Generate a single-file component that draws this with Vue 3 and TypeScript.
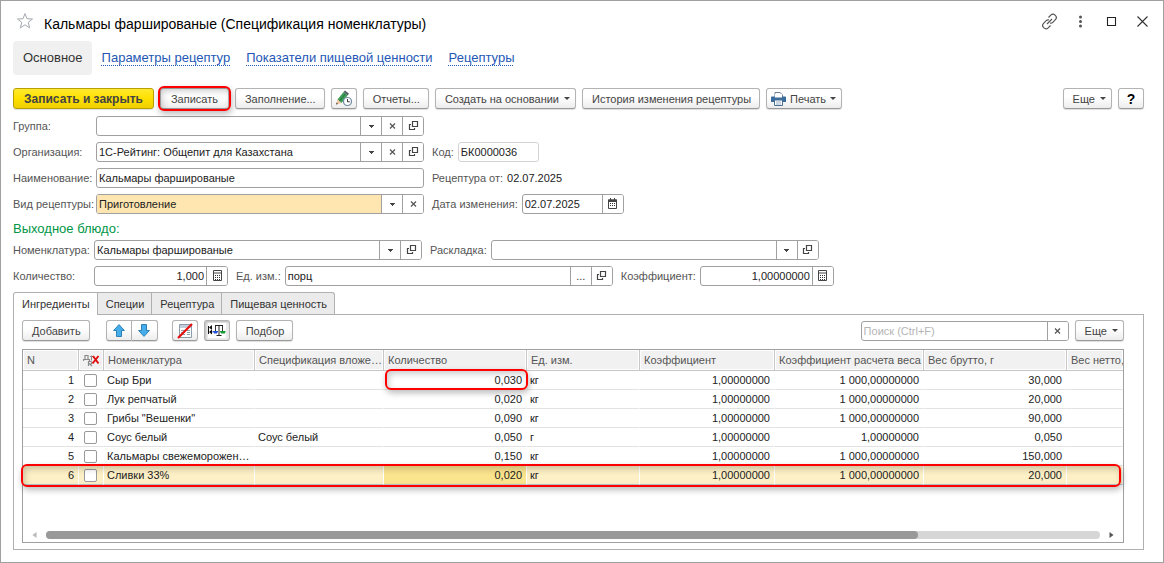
<script setup lang="ts">
import { reactive, ref } from 'vue'

interface Ingredient {
  n: number
  checked: boolean
  name: string
  spec: string
  qty: string
  unit: string
  coef: string
  weightCoef: string
  gross: string
}

const HEADER_HEIGHT = 21
const ROW_HEIGHT = 19
const VISIBLE_WIDTH = 1101
const CONTENT_WIDTH = 1331

const columns = ['Номенклатура', 'Спецификация вложе…', 'Количество', 'Ед. изм.', 'Коэффициент', 'Коэффициент расчета веса', 'Вес брутто, г', 'Вес нетто,']
const links = ['Параметры рецептур', 'Показатели пищевой ценности', 'Рецептуры']
const tabs = ['Ингредиенты', 'Специи', 'Рецептура', 'Пищевая ценность']

const rows = reactive<Ingredient[]>([
  { n: 1, checked: false, name: 'Сыр Бри', spec: '', qty: '0,030', unit: 'кг', coef: '1,00000000', weightCoef: '1 000,00000000', gross: '30,000' },
  { n: 2, checked: false, name: 'Лук репчатый', spec: '', qty: '0,020', unit: 'кг', coef: '1,00000000', weightCoef: '1 000,00000000', gross: '20,000' },
  { n: 3, checked: false, name: 'Грибы "Вешенки"', spec: '', qty: '0,090', unit: 'кг', coef: '1,00000000', weightCoef: '1 000,00000000', gross: '90,000' },
  { n: 4, checked: false, name: 'Соус белый', spec: 'Соус белый', qty: '0,050', unit: 'г', coef: '1,00000000', weightCoef: '1,00000000', gross: '0,050' },
  { n: 5, checked: false, name: 'Кальмары свежеморожен…', spec: '', qty: '0,150', unit: 'кг', coef: '1,00000000', weightCoef: '1 000,00000000', gross: '150,000' },
  { n: 6, checked: false, name: 'Сливки 33%', spec: '', qty: '0,020', unit: 'кг', coef: '1,00000000', weightCoef: '1 000,00000000', gross: '20,000' },
])

const form = reactive({
  group: '',
  org: '1С-Рейтинг: Общепит для Казахстана',
  code: 'БК0000036',
  name: 'Кальмары фаршированые',
  kind: 'Приготовление',
  changed: '02.07.2025',
  item: 'Кальмары фаршированые',
  layout: '',
  qty: '1,000',
  unit: 'порц',
  coef: '1,00000000',
})

const activeTab = ref(0)
const selected = ref(5)
const search = ref('')
</script>

<template>
  <svg class="defs" aria-hidden="true">
    <symbol id="i-drop" viewBox="0 0 13 12"><path d="M4 5h5v1H8v1H7v1H6V7H5V6H4z" fill="#444" /></symbol>
    <symbol id="i-clear" viewBox="0 0 13 12"><path d="M4 3.5l5 5M9 3.5l-5 5" stroke="#555" stroke-width="1.2" fill="none" /></symbol>
    <symbol id="i-open" viewBox="0 0 13 12"><path d="M5.500 1.500h5v5h-5z" fill="none" stroke="#444" stroke-width="1.200" /><path d="M4 4.500H2.500v5h5V8" fill="none" stroke="#444" stroke-width="1.200" /></symbol>
    <symbol id="i-calc" viewBox="0 0 13 12"><path d="M2.5.5h8v10h-8zM2.5 3h8" fill="none" stroke="#444" /><path d="M4 5h1v1H4zM6 5h1v1H6zM8 5h1v1H8zM4 7h1v1H4zM6 7h1v1H6zM8 7h1v1H8zM4 9h1v1H4zM6 9h1v1H6zM8 9h1v1H8z" fill="#333" /></symbol>
    <symbol id="i-date" viewBox="0 0 13 12"><path d="M2.5 2h8v8.5h-8z" fill="none" stroke="#444" /><path d="M2 1.5h9V4H2zM4 0h1v2H4zM8 0h1v2H8z" fill="#444" /><path d="M4 5h1v1H4zM6 5h1v1H6zM8 5h1v1H8zM4 7h1v1H4zM6 7h1v1H6zM8 7h1v1H8z" fill="#333" /></symbol>
  </svg>

  <main class="window">
    <header class="titlebar">
      <button class="flat" type="button" aria-label="Добавить в избранное">
        <svg width="18" height="18" viewBox="0 0 18 18"><path d="M9 1.600l2 5.100 5.500.3-4.300 3.400 1.500 5.500L9 12.800l-4.700 3.100 1.500-5.500L1.500 7 7 6.700z" fill="#fff" stroke="#a3a9b0" /></svg>
      </button>
      <h1>Кальмары фаршированые (Спецификация номенклатуры)</h1>
      <div class="window-tools">
        <button class="flat" type="button" aria-label="Ссылка">
          <svg width="17" height="17" viewBox="0 0 17 17" fill="none" stroke="#555" stroke-width="1.200"><path d="M7.500 4.500l2.300-2.300c1.200-1.200 3-1.200 4.200-.1l.5.500c1.100 1.200 1 3-.1 4.100l-2.600 2.600c-.8.800-1.800 1-2.700.8M9.500 12.500l-2.300 2.300c-1.200 1.200-3 1.200-4.200.1l-.5-.5c-1.100-1.200-1-3 .1-4.100l2.600-2.600c.8-.8 1.800-1 2.700-.8M6 11l5-5" /></svg>
        </button>
        <button class="flat" type="button" aria-label="Меню">
          <svg width="17" height="17" viewBox="0 0 17 17" fill="#555"><circle cx="8.500" cy="4" r="1.500" /><circle cx="8.500" cy="8.500" r="1.500" /><circle cx="8.500" cy="13" r="1.500" /></svg>
        </button>
        <button class="flat" type="button" aria-label="Развернуть">
          <svg width="17" height="17" viewBox="0 0 17 17"><path d="M4.500 4.500h8v8h-8z" fill="none" stroke="#222" stroke-width="1.100" /></svg>
        </button>
        <button class="flat" type="button" aria-label="Закрыть">
          <svg width="17" height="17" viewBox="0 0 17 17"><path d="M3.500 3.500l10 10M13.500 3.500l-10 10" stroke="#333" stroke-width="1.100" /></svg>
        </button>
      </div>
    </header>

    <nav class="sections">
      <button class="section-current" type="button">Основное</button>
      <a v-for="link in links" :key="link" href="#">{{ link }}</a>
    </nav>

    <div class="toolbar">
      <button class="btn primary" type="button">Записать и закрыть</button>
      <button class="btn marked" type="button">Записать<span class="mark"></span></button>
      <button class="btn" type="button">Заполнение...</button>
      <button class="btn icon" type="button" aria-label="История">
        <svg width="18" height="17" viewBox="0 0 18 17"><path d="M2.500 9.500L8.500 2l4 3.500-6 7.500z" fill="#3fa05a" /><path d="M4.500 11.200L10.500 3.700" stroke="#2c7c44" stroke-width="1.200" /><path d="M8.500 2L10 .5l4 3.300-1.500 1.700z" fill="#555f66" /><path d="M2.500 9.500L1 14.500l5.500-1.500z" fill="#efc49c" /><path d="M1 14.500l.6-2 1.400 1.500z" fill="#444" /><circle cx="12.500" cy="11.500" r="4" fill="#fff" stroke="#6f89a5" stroke-width="1.200" /><path d="M12.500 9v2.800h2.300" fill="none" stroke="#333" /></svg>
      </button>
      <button class="btn" type="button">Отчеты...</button>
      <button class="btn drop" type="button">Создать на основании<i class="caret"></i></button>
      <button class="btn" type="button">История изменения рецептуры</button>
      <button class="btn drop print" type="button">
        <svg width="15" height="14" viewBox="0 0 15 14"><path d="M4 .5h5l2.500 2.300V6H4z" fill="#fff" stroke="#6a8097" /><path d="M1 4.500h13c.6 0 1 .4 1 1V10H0V5.500c0-.6.400-1 1-1z" fill="#3b6d9c" /><path d="M4 2h7v3.500H4z" fill="#fff" /><path d="M3.500 8h8v5.500h-8z" fill="#fff" stroke="#4b6f93" /><path d="M5 10h5M5 12h5" stroke="#9ab0c4" /></svg>
        Печать<i class="caret"></i>
      </button>
      <button class="btn drop push" type="button">Еще<i class="caret"></i></button>
      <button class="btn icon help" type="button">?</button>
    </div>

    <section class="form">
      <div class="row">
        <label class="lead" for="f-group">Группа:</label>
        <div class="field w-main">
          <input id="f-group" v-model="form.group" type="text" />
          <button type="button" aria-label="Выбрать"><svg><use href="#i-drop" /></svg></button>
          <button type="button" aria-label="Очистить"><svg><use href="#i-clear" /></svg></button>
          <button type="button" aria-label="Открыть"><svg><use href="#i-open" /></svg></button>
        </div>
      </div>
      <div class="row">
        <label class="lead" for="f-org">Организация:</label>
        <div class="field w-main">
          <input id="f-org" v-model="form.org" type="text" />
          <button type="button" aria-label="Выбрать"><svg><use href="#i-drop" /></svg></button>
          <button type="button" aria-label="Очистить"><svg><use href="#i-clear" /></svg></button>
          <button type="button" aria-label="Открыть"><svg><use href="#i-open" /></svg></button>
        </div>
        <label for="f-code">Код:</label>
        <div class="field w-code"><input id="f-code" v-model="form.code" type="text" readonly /></div>
      </div>
      <div class="row">
        <label class="lead" for="f-name">Наименование:</label>
        <div class="field w-main"><input id="f-name" v-model="form.name" type="text" /></div>
        <span class="caption">Рецептура от:</span>
        <output class="value">02.07.2025</output>
      </div>
      <div class="row">
        <label class="lead" for="f-kind">Вид рецептуры:</label>
        <div class="field w-main attention">
          <input id="f-kind" v-model="form.kind" type="text" />
          <button type="button" aria-label="Выбрать"><svg><use href="#i-drop" /></svg></button>
          <button type="button" aria-label="Очистить"><svg><use href="#i-clear" /></svg></button>
        </div>
        <label for="f-date">Дата изменения:</label>
        <div class="field w-date">
          <input id="f-date" v-model="form.changed" type="text" />
          <button type="button" aria-label="Календарь"><svg><use href="#i-date" /></svg></button>
        </div>
      </div>

      <h2>Выходное блюдо:</h2>

      <div class="row">
        <label class="lead dish" for="f-item">Номенклатура:</label>
        <div class="field w-main">
          <input id="f-item" v-model="form.item" type="text" />
          <button type="button" aria-label="Выбрать"><svg><use href="#i-drop" /></svg></button>
          <button type="button" aria-label="Открыть"><svg><use href="#i-open" /></svg></button>
        </div>
        <label for="f-layout">Раскладка:</label>
        <div class="field w-main">
          <input id="f-layout" v-model="form.layout" type="text" />
          <button type="button" aria-label="Выбрать"><svg><use href="#i-drop" /></svg></button>
          <button type="button" aria-label="Открыть"><svg><use href="#i-open" /></svg></button>
        </div>
      </div>
      <div class="row">
        <label class="lead dish" for="f-qty">Количество:</label>
        <div class="field w-num">
          <input id="f-qty" v-model="form.qty" class="num" type="text" />
          <button type="button" aria-label="Калькулятор"><svg><use href="#i-calc" /></svg></button>
        </div>
        <label for="f-unit">Ед. изм.:</label>
        <div class="field w-main">
          <input id="f-unit" v-model="form.unit" type="text" />
          <button type="button">...</button>
          <button type="button" aria-label="Открыть"><svg><use href="#i-open" /></svg></button>
        </div>
        <label for="f-coef">Коэффициент:</label>
        <div class="field w-num">
          <input id="f-coef" v-model="form.coef" class="num" type="text" />
          <button type="button" aria-label="Калькулятор"><svg><use href="#i-calc" /></svg></button>
        </div>
      </div>
    </section>

    <div class="tabs" role="tablist">
      <button
        v-for="(tab, i) in tabs"
        :key="tab"
        type="button"
        role="tab"
        :class="{ active: i === activeTab }"
        :aria-selected="i === activeTab"
        @click="activeTab = i"
      >{{ tab }}</button>
    </div>

    <section class="panel">
      <div class="panel-tools">
        <button class="btn" type="button">Добавить</button>
        <div class="pair">
          <button class="btn icon" type="button" aria-label="Вверх">
            <svg width="12" height="13" viewBox="0 0 12 13"><path d="M6 .6l5.400 5.900H8.500v6h-5v-6H.6z" fill="#45aeea" stroke="#2f80b5" /></svg>
          </button>
          <button class="btn icon" type="button" aria-label="Вниз">
            <svg width="12" height="13" viewBox="0 0 12 13"><path d="M6 12.400L.6 6.500h2.900v-6h5v6h2.900z" fill="#45aeea" stroke="#2f80b5" /></svg>
          </button>
        </div>
        <button class="btn icon" type="button" aria-label="Отменить список">
          <svg width="18" height="16" viewBox="0 0 18 16"><path d="M3.500 1.500h12v13h-12z" fill="#fff" stroke="#8b9cab" /><path d="M4 2h11v3H4z" fill="#c3ced8" /><path d="M5 7.500h4M5 9.500h4M5 11.500h4M11 7.500h3M11 9.500h3M11 11.500h3" stroke="#8b9cab" /><path d="M2 15L16 1" stroke="#e80c0c" stroke-width="2.200" /></svg>
        </button>
        <button class="btn icon pressed" type="button" aria-label="Весы">
          <svg width="18" height="15" viewBox="0 0 18 15"><path d="M0 0h18v15H0z" fill="#fff" /><path d="M1 4.500L4 2v5zM1 9l3 2.500v-5zM0 3h1v8H0z" fill="#111" /><path d="M11 2v10M8.500 12.500h5M7 2.500h8" stroke="#222" fill="none" /><path d="M7.500 3v5M14.500 3v5" fill="none" stroke="#333" /><path d="M4.500 8H10v1.500H9v1H6v-1H4.500z" fill="#2455d8" /><path d="M12 8h5.500v1.500H17v1h-4v-1h-1z" fill="#1a9a32" /></svg>
        </button>
        <button class="btn" type="button">Подбор</button>
        <div class="field search">
          <input v-model="search" type="text" placeholder="Поиск (Ctrl+F)" aria-label="Поиск" />
          <button type="button" aria-label="Очистить поиск"><svg><use href="#i-clear" /></svg></button>
        </div>
        <button class="btn drop" type="button">Еще<i class="caret"></i></button>
      </div>

      <div class="grid">
        <div class="grid-view">
          <table>
            <colgroup>
              <col class="c-n" /><col class="c-check" /><col class="c-name" /><col class="c-spec" /><col class="c-qty" />
              <col class="c-unit" /><col class="c-coef" /><col class="c-weight" /><col class="c-gross" /><col />
            </colgroup>
            <thead>
              <tr>
                <th>N</th>
                <th class="flag" aria-label="Отметка">
                  <svg width="17" height="13" viewBox="0 0 17 13"><path d="M1 5.500h5M2 5V1.500h3V5M.5 5v2M6.500 5v2M5.500 12V7.500h2.200c1.500 0 1.500 2.300 0 2.300H5.500M7 10l2 2" fill="none" stroke="#8a8a8a" stroke-width="1.200" /><path d="M8.500 1.500v5M7 2.500h3" stroke="#8a8a8a" /><path d="M10 2l5.500 7.500M15.500 2L9.500 9.500" stroke="#e01010" stroke-width="2" /></svg>
                </th>
                <th v-for="col in columns" :key="col">{{ col }}</th>
              </tr>
            </thead>
            <tbody>
              <tr v-for="(row, i) in rows" :key="row.n" :class="{ selected: i === selected }" @click="selected = i">
                <td class="num">{{ row.n }}</td>
                <td class="flag"><input v-model="row.checked" type="checkbox" :aria-label="row.name" /></td>
                <td>{{ row.name }}</td>
                <td>{{ row.spec }}</td>
                <td class="num qty">{{ row.qty }}<span v-if="i === 0" class="mark"></span></td>
                <td>{{ row.unit }}</td>
                <td class="num">{{ row.coef }}</td>
                <td class="num">{{ row.weightCoef }}</td>
                <td class="num">{{ row.gross }}</td>
                <td></td>
              </tr>
            </tbody>
          </table>
        </div>
        <div class="row-mark" :style="{ top: `${HEADER_HEIGHT + selected * ROW_HEIGHT - 2}px` }"></div>
        <div class="scroller">
          <svg width="5" height="6" viewBox="0 0 5 6"><path d="M4.500 0v6L.5 3z" fill="#b8b8b8" /></svg>
          <div class="track"><div class="thumb" :style="{ width: `${(VISIBLE_WIDTH / CONTENT_WIDTH) * 100}%` }"></div></div>
          <svg width="5" height="6" viewBox="0 0 5 6"><path d="M.5 0v6l4-3z" fill="#555" /></svg>
        </div>
      </div>
    </section>
  </main>
</template>

<style>
body {
  margin: 0;
  background: #fff;
}
</style>

<style scoped>
* {
  box-sizing: border-box;
}

.defs {
  display: none;
}

.window {
  display: flex;
  flex-direction: column;
  min-height: 100vh;
  padding: 0 19px 12px 12px;
  border: 1px solid #a0a0a0;
  background: #fff;
  color: #333;
  font: 11px/14px "Liberation Sans", Arial, sans-serif;
}

button,
input {
  margin: 0;
  font: inherit;
  color: inherit;
}

svg {
  display: block;
  flex: none;
}

.flat {
  padding: 0;
  border: 0;
  background: none;
}

.titlebar {
  display: flex;
  align-items: center;
  height: 40px;
  padding-left: 3px;
}

h1 {
  flex: 1;
  margin: 0;
  padding: 6px 0 0 10px;
  color: #000;
  font-size: 14px;
  font-weight: 400;
  line-height: 16px;
}

.window-tools {
  display: flex;
  gap: 14px;
  margin-right: -7px;
}

.sections {
  display: flex;
  align-items: center;
  gap: 16px;
  height: 34px;
  font-size: 13px;
}

.section-current {
  height: 34px;
  margin-right: -6px;
  padding: 0 9px 0 10px;
  border: 0;
  border-radius: 4px;
  background: #f0f0f0;
}

.sections a {
  color: #2457b5;
  text-decoration: underline dotted 1px;
  text-underline-offset: 3px;
}

.toolbar {
  display: flex;
  gap: 6px;
  margin-top: 13px;
}

.btn {
  display: flex;
  align-items: center;
  justify-content: center;
  height: 21px;
  padding: 0 8px 0 9px;
  border: 1px solid #b3b3b3;
  border-bottom-color: #999;
  border-radius: 3px;
  background: linear-gradient(#fff 40%, #ededed);
  box-shadow: 0 1px 1px #0002;
  color: #444;
  white-space: nowrap;
}

.primary {
  padding: 0 10px;
  border-color: #b8a000;
  background: linear-gradient(#ffe92e, #ffe000 50%, #efcf00);
  font-size: 12px;
  font-weight: 700;
}

.marked {
  position: relative;
  padding: 0 10px;
}

.icon {
  width: 26px;
  padding: 0;
}

.drop {
  gap: 5px;
  padding-right: 5px;
}

.print {
  gap: 4px;
  padding-left: 4px;
}

.caret {
  border: 3px solid transparent;
  border-bottom-width: 0;
  border-top-color: #444;
}

.push {
  margin-left: auto;
}

.help {
  color: #000;
  font-size: 14px;
  font-weight: 700;
}

.mark,
.row-mark {
  position: absolute;
  border: 2px solid #f00;
  border-radius: 6px;
  box-shadow: 1px 3px 6px #0004, inset 2px 3px 6px #0003;
  pointer-events: none;
}

.mark {
  inset: -3px;
}

.form {
  display: flex;
  flex-direction: column;
  gap: 6px;
  margin-top: 7px;
}

.row {
  display: flex;
  align-items: center;
  height: 20px;
}

label,
.caption {
  margin: 0 4px 0 8px;
  color: #555;
  white-space: nowrap;
}

.lead {
  width: 83px;
  margin: 0;
}

.dish {
  width: 81px;
}

h2 {
  margin: 2px 0 -2px;
  color: #009646;
  font-size: 13px;
  font-weight: 400;
  line-height: 14px;
}

.field {
  display: flex;
  height: 20px;
  overflow: hidden;
  border: 1px solid #a0a0a0;
  border-radius: 3px;
  background: #fff;
}

.field input {
  flex: 1;
  min-width: 0;
  padding: 0 2px;
  border: 0;
  outline: 0;
  background: none;
  color: #222;
}

.field input::placeholder {
  color: #b5b5b5;
  opacity: 1;
}

.field button {
  display: flex;
  flex: none;
  align-items: center;
  justify-content: center;
  width: 21px;
  padding: 0;
  border: 0;
  border-left: 1px solid #a0a0a0;
  background: #fff;
}

.field svg {
  width: 13px;
  height: 12px;
}

.w-main {
  width: 328px;
}

.w-code {
  width: 81px;
  border-color: #d4d4d4;
}

.w-date {
  width: 102px;
}

.w-num {
  width: 134px;
}

.attention input {
  background: #ffe6b0;
}

.value {
  color: #222;
}

.num,
.field .num {
  text-align: right;
}

.tabs {
  display: flex;
  margin-top: 6px;
}

.tabs button {
  height: 22px;
  padding: 0 7px 0 8px;
  border: 1px solid #b0b0b0;
  border-bottom: 0;
  border-left-width: 0;
  background: #ebebeb;
}

.tabs button:first-child {
  border-left-width: 1px;
  border-top-left-radius: 3px;
}

.tabs button:last-child {
  border-top-right-radius: 3px;
}

.tabs .active {
  z-index: 1;
  height: 23px;
  margin-bottom: -1px;
  background: #fff;
}

.panel {
  display: flex;
  flex: 1;
  flex-direction: column;
  padding: 5px 19px 6px 8px;
  border: 1px solid #b0b0b0;
}

.panel-tools {
  display: flex;
  align-items: center;
}

.panel-tools > .btn,
.pair {
  margin-right: 6px;
}

.pair {
  display: flex;
  margin: 0 14px 0 10px;
}

.pair .btn:first-child {
  border-radius: 3px 0 0 3px;
}

.pair .btn:last-child {
  border-left: 0;
  border-radius: 0 3px 3px 0;
}

.panel-tools > .pressed {
  background: #e9e9e9;
  box-shadow: inset 1px 1px 2px #0003;
}

.search {
  width: 208px;
  margin: 0 6px 0 auto;
}

.panel-tools > .btn:last-child {
  margin-right: 0;
}

.grid {
  position: relative;
  display: flex;
  flex: 1;
  flex-direction: column;
  margin-top: 8px;
  border: 1px solid #a0a0a0;
}

.grid-view {
  flex: 1;
  overflow: hidden;
}

table {
  width: 100%;
  table-layout: fixed;
  border-collapse: separate;
  border-spacing: 0;
}

.c-n {
  width: 56px;
}

.c-check {
  width: 25px;
}

.c-name {
  width: 151px;
}

.c-spec {
  width: 129px;
}

.c-qty,
.c-gross {
  width: 143px;
}

.c-unit {
  width: 113px;
}

.c-coef {
  width: 135px;
}

.c-weight {
  width: 149px;
}

th {
  height: 21px;
  padding: 0 0 0 4px;
  overflow: hidden;
  border-right: 1px solid #c6c6c6;
  border-bottom: 1px solid #c6c6c6;
  background: #f1f1f1;
  box-shadow: inset 0 0 0 1px #fff;
  color: #555;
  font-weight: 400;
  text-align: left;
  white-space: nowrap;
}

th:last-child {
  border-right: 0;
}

td {
  height: 19px;
  padding: 0 4px 0 3px;
  border-right: 1px solid transparent;
  border-bottom: 1px solid #e2e2e2;
  color: #222;
  white-space: nowrap;
}

.flag {
  padding: 0 4px;
}

td.flag input {
  display: block;
  width: 13px;
  height: 13px;
  margin: 0 0 0 1px;
  border: 1px solid #999;
  border-radius: 2px;
  appearance: none;
  background: #fff;
}

td.flag input:checked {
  background: #777;
}

.qty {
  position: relative;
}

.qty .mark {
  inset: -2px -2px -1px 1px;
}

.selected td {
  border-right-color: #fff;
  border-bottom-color: #b9c3cc;
  background: #fdf0c6;
}

.selected .qty {
  background: #fbe48e;
}

.row-mark {
  right: 2px;
  left: -2px;
  height: 23px;
}

.scroller {
  display: flex;
  align-items: center;
  gap: 9px;
  padding: 0 9px 3px;
}

.track {
  flex: 1;
  height: 8px;
  border-radius: 4px;
  background: #d6d6d6;
}

.thumb {
  height: 8px;
  border-radius: 4px;
  background: #999;
}
</style>
